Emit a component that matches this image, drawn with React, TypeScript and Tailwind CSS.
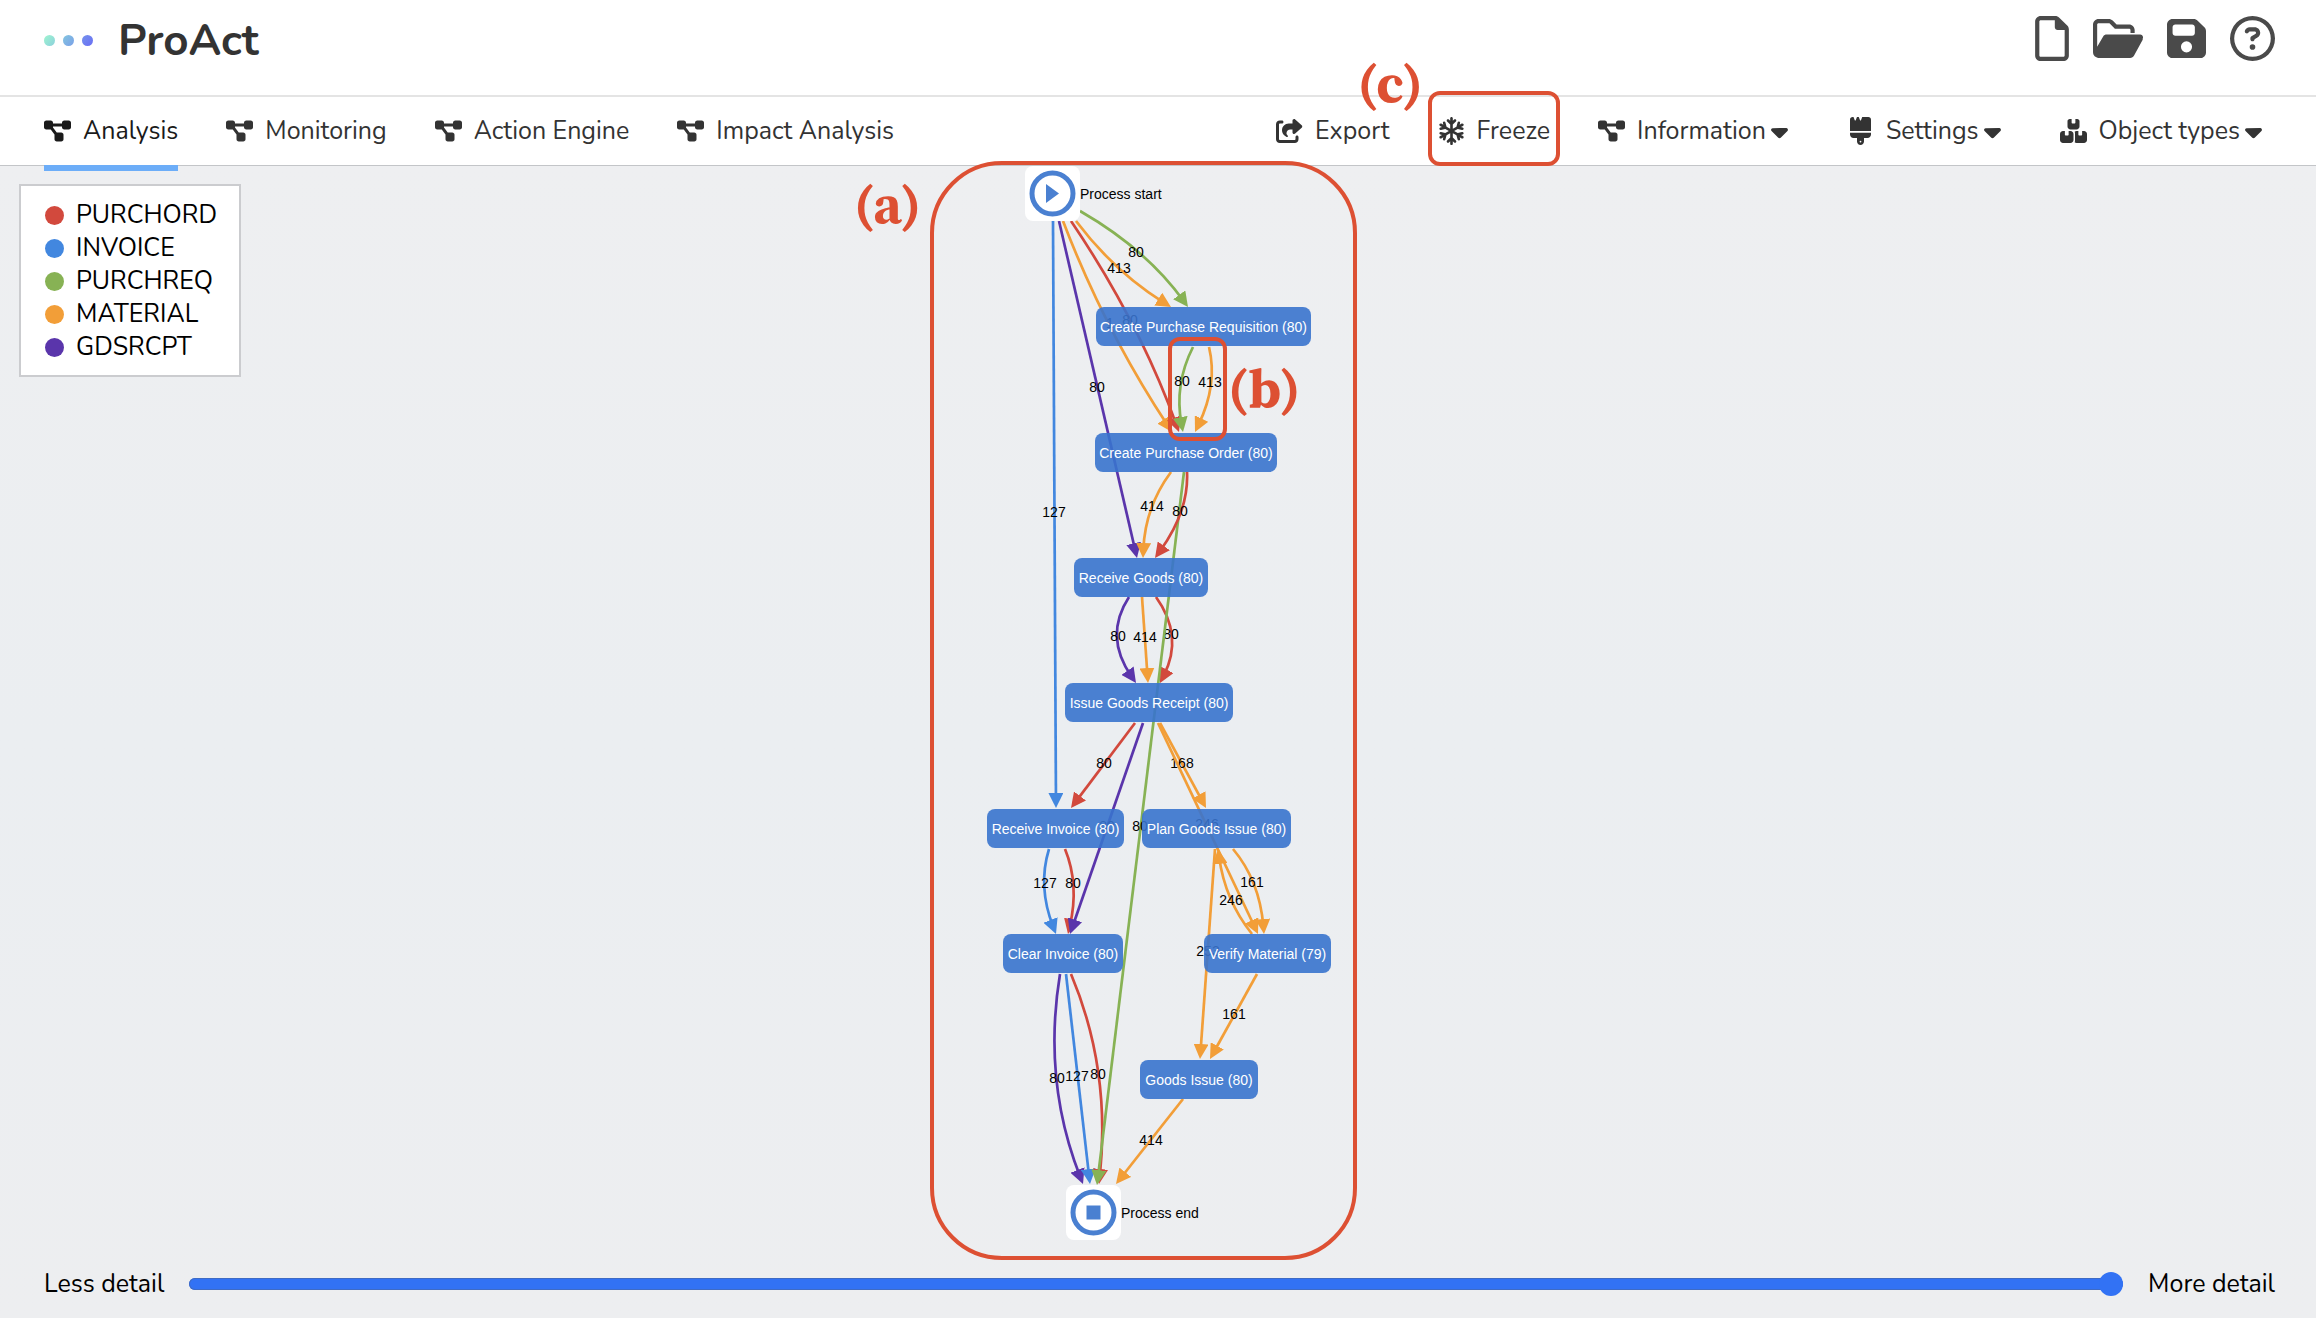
import { useState } from "react";
import type { ReactNode } from "react";
import {
  FaBoxesStacked,
  FaBrush,
  FaCaretDown,
  FaDiagramProject,
  FaFloppyDisk,
  FaRegCircleQuestion,
  FaRegFile,
  FaRegSnowflake,
  FaShareFromSquare,
} from "react-icons/fa6";

type Point = [number, number];

const COLORS = {
  red: "#d2493d",
  blue: "#4287df",
  green: "#87b254",
  orange: "#f29e38",
  purple: "#5a35ab",
};

type Color = keyof typeof COLORS;

type Edge = {
  color: Color;
  from: Point;
  to: Point;
  label: string;
  at: Point;
  via?: Point;
};

const LEGEND: { name: string; dot: string }[] = [
  { name: "PURCHORD", dot: "bg-[#d2493d]" },
  { name: "INVOICE", dot: "bg-[#4287df]" },
  { name: "PURCHREQ", dot: "bg-[#87b254]" },
  { name: "MATERIAL", dot: "bg-[#f29e38]" },
  { name: "GDSRCPT", dot: "bg-[#5a35ab]" },
];

const EDGES: Edge[] = [
  { color: "blue", from: [1053, 221], to: [1056, 808], label: "127", at: [1054, 512] },
  { color: "purple", from: [1059, 221], to: [1137, 558], label: "80", at: [1097, 387] },
  { color: "orange", from: [1063, 221], to: [1172, 432], via: [1111, 328], label: "1", at: [1110, 323] },
  { color: "red", from: [1071, 221], to: [1179, 432], via: [1132, 324], label: "80", at: [1130, 320] },
  { color: "orange", from: [1076, 221], to: [1171, 307], via: [1119, 268], label: "413", at: [1119, 268] },
  { color: "green", from: [1080, 211], to: [1188, 307], via: [1140, 254], label: "80", at: [1136, 252] },
  { color: "green", from: [1193, 347], to: [1183, 432], via: [1181, 387], label: "80", at: [1182, 381] },
  { color: "orange", from: [1209, 347], to: [1195, 432], via: [1210, 387], label: "413", at: [1210, 382] },
  { color: "orange", from: [1171, 472], to: [1143, 558], via: [1151, 511], label: "414", at: [1152, 506] },
  { color: "purple", from: [1129, 597], to: [1136, 683], via: [1118, 638], label: "80", at: [1118, 636] },
  { color: "orange", from: [1142, 597], to: [1148, 683], label: "414", at: [1145, 637] },
  { color: "red", from: [1156, 597], to: [1160, 683], via: [1171, 638], label: "80", at: [1171, 634] },
  { color: "red", from: [1135, 723], to: [1071, 808], label: "80", at: [1104, 763] },
  { color: "orange", from: [1160, 723], to: [1206, 808], label: "168", at: [1182, 763] },
  { color: "orange", from: [1158, 723], to: [1258, 934], label: "246", at: [1207, 824] },
  { color: "orange", from: [1252, 934], to: [1218, 849], via: [1230, 896], label: "246", at: [1231, 900] },
  { color: "orange", from: [1233, 849], to: [1264, 934], via: [1254, 886], label: "161", at: [1252, 882] },
  { color: "orange", from: [1215, 849], to: [1200, 1059], label: "253", at: [1208, 951] },
  { color: "blue", from: [1049, 849], to: [1056, 934], via: [1045, 889], label: "127", at: [1045, 883] },
  { color: "red", from: [1065, 849], to: [1068, 934], via: [1073, 888], label: "80", at: [1073, 883] },
  { color: "purple", from: [1143, 723], to: [1070, 934], label: "80", at: [1107, 826] },
  { color: "purple", from: [1060, 974], to: [1083, 1184], via: [1057, 1080], label: "80", at: [1057, 1078] },
  { color: "blue", from: [1066, 974], to: [1090, 1184], label: "127", at: [1077, 1076] },
  { color: "red", from: [1071, 974], to: [1099, 1184], via: [1098, 1074], label: "80", at: [1098, 1074] },
  { color: "green", from: [1184, 472], to: [1097, 1185], label: "80", at: [1140, 826] },
  { color: "red", from: [1187, 472], to: [1155, 558], via: [1180, 513], label: "80", at: [1180, 511] },
  { color: "orange", from: [1257, 974], to: [1210, 1059], label: "161", at: [1234, 1014] },
  { color: "orange", from: [1183, 1099], to: [1116, 1184], label: "414", at: [1151, 1140] },
];

const NODES: { name: string; place: string }[] = [
  { name: "Create Purchase Requisition (80)", place: "left-[258px] top-[141px] w-[215px]" },
  { name: "Create Purchase Order (80)", place: "left-[257px] top-[267px] w-[182px]" },
  { name: "Receive Goods (80)", place: "left-[236px] top-[392px] w-[134px]" },
  { name: "Issue Goods Receipt (80)", place: "left-[227px] top-[517px] w-[168px]" },
  { name: "Receive Invoice (80)", place: "left-[149px] top-[643px] w-[137px]" },
  { name: "Plan Goods Issue (80)", place: "left-[304px] top-[643px] w-[149px]" },
  { name: "Clear Invoice (80)", place: "left-[165px] top-[768px] w-[120px]" },
  { name: "Verify Material (79)", place: "left-[366px] top-[768px] w-[127px]" },
  { name: "Goods Issue (80)", place: "left-[302px] top-[894px] w-[118px]" },
];

const ARROW_LENGTH = 15;
const OVERLAP = 8;

/** Quadratic curve through `via`, stopped inside its arrow head. */
function edgePath({ from, to, via }: Edge): string {
  const mid = via ?? [(from[0] + to[0]) / 2, (from[1] + to[1]) / 2];
  const cx = 2 * mid[0] - (from[0] + to[0]) / 2;
  const cy = 2 * mid[1] - (from[1] + to[1]) / 2;
  const dx = to[0] - cx;
  const dy = to[1] - cy;
  const len = Math.hypot(dx, dy);
  const ex = to[0] - (dx / len) * OVERLAP;
  const ey = to[1] - (dy / len) * OVERLAP;
  return `M${from[0]} ${from[1]} Q${cx} ${cy} ${ex} ${ey}`;
}

function Edges() {
  return (
    <svg viewBox="838 166 640 1094" className="absolute inset-0 h-full w-full" aria-label="Process flow">
      <defs>
        {(Object.keys(COLORS) as Color[]).map((c) => (
          <marker
            key={c}
            id={`arrow-${c}`}
            markerUnits="userSpaceOnUse"
            markerWidth={ARROW_LENGTH}
            markerHeight="15"
            refX={ARROW_LENGTH - OVERLAP}
            refY="7.5"
            orient="auto"
          >
            <path d="M0 0L15 7.5L0 15Z" fill={COLORS[c]} />
          </marker>
        ))}
      </defs>
      {EDGES.map((e, i) => (
        <g key={i}>
          <path
            d={edgePath(e)}
            fill="none"
            stroke={COLORS[e.color]}
            strokeWidth="2.7"
            markerEnd={`url(#arrow-${e.color})`}
          />
          <text x={e.at[0]} y={e.at[1] + 5} textAnchor="middle" className="fill-black text-[14px]">
            {e.label}
          </text>
        </g>
      ))}
    </svg>
  );
}

function Terminal({ label, place, children }: { label: string; place: string; children: ReactNode }) {
  return (
    <div className={`absolute flex items-center ${place}`}>
      <svg viewBox="0 0 55 55" className="size-[55px] rounded-lg bg-white" aria-hidden="true">
        <circle cx="27.5" cy="27.5" r="20.5" fill="none" stroke="#4a80d1" strokeWidth="5" />
        {children}
      </svg>
      <span className="whitespace-nowrap text-[14px] leading-5 text-black">{label}</span>
    </div>
  );
}

function FolderOpenIcon() {
  return (
    <svg viewBox="0 0 576 448" className="w-[50px]" fill="currentColor" aria-hidden="true">
      <path d="M572.6 238.1l-99.2 182C464.6 437 447 448 427.8 448H64C28.7 448 0 419.3 0 384V64C0 28.7 28.7 0 64 0h117.500c17 0 33.300 6.700 45.300 18.700L272 64h144c35.300 0 64 28.700 64 64v32h-48v-32c0-8.800-7.200-16-16-16H252.100l-59.300-59.300c-3-3-7.100-4.700-11.300-4.700H64c-8.800 0-16 7.200-16 16v256l69.100-118.500c8.600-14.700 24.300-21.500 41.300-21.500H544c24.600 0 40.100 24.600 28.600 46.100z" />
    </svg>
  );
}

function Callout({ text, place }: { text: string; place: string }) {
  return (
    <span
      className={`absolute font-['Source_Serif_4','Source_Serif_Pro','Noto_Serif_CJK_SC','Noto_Serif','PT_Serif','Liberation_Serif',serif] text-[54px] font-bold leading-[48px] text-[#dd5033] ${place}`}
    >
      {text}
    </span>
  );
}

function NavButton({
  icon,
  label,
  active = false,
  menu = false,
  children,
}: {
  icon: ReactNode;
  label: string;
  active?: boolean;
  menu?: boolean;
  children?: ReactNode;
}) {
  return (
    <button
      type="button"
      aria-haspopup={menu ? "menu" : undefined}
      className={`relative flex h-full items-center whitespace-nowrap ${menu ? "pr-[11px]" : ""} ${
        active ? "text-[#1a1a1a]" : "text-[#333333]"
      }`}
    >
      <span className="mr-3 flex w-[27px] justify-center">{icon}</span>
      {label}
      {menu && <FaCaretDown className="ml-[5px] h-[27px] w-[17px]" />}
      {active && <span className="absolute -bottom-[6px] left-0 z-10 h-[6px] w-full bg-[#6cadf8]" />}
      {children}
    </button>
  );
}

const diagram = <FaDiagramProject className="h-6 w-[27px]" />;

export default function App() {
  const [detail, setDetail] = useState(100);

  return (
    <div className="flex min-h-screen flex-col bg-white font-['Nunito','Lato',sans-serif] text-[25px] leading-8 text-black">
      <header className="flex h-[97px] items-center justify-between border-b-2 border-[#e4e4e4] pb-[18px] pl-11 pr-[41px]">
        <div className="flex items-center gap-[25px] pt-1">
          <div className="flex gap-2">
            <span className="size-[11px] rounded-full bg-linear-to-br from-[#9ff5cf] to-[#8cd0dc]" />
            <span className="size-[11px] rounded-full bg-linear-to-br from-[#84c6df] to-[#7a9fe8]" />
            <span className="size-[11px] rounded-full bg-linear-to-br from-[#7592ec] to-[#6a6df4]" />
          </div>
          <h1 className="text-[44px] font-bold leading-[52px] text-[#333333]">ProAct</h1>
        </div>
        <div className="flex items-center gap-6 text-[#4a4a4a]">
          <button type="button" aria-label="New file">
            <FaRegFile className="h-[45px] w-[34px]" />
          </button>
          <button type="button" aria-label="Open file">
            <FolderOpenIcon />
          </button>
          <button type="button" aria-label="Save file">
            <FaFloppyDisk className="h-[45px] w-[39px]" />
          </button>
          <button type="button" aria-label="Help">
            <FaRegCircleQuestion className="size-[45px]" />
          </button>
        </div>
      </header>

      <nav className="flex h-[69px] items-center justify-between border-b border-[#c3c5c8] pl-11 pr-[43px]">
        <div className="flex h-full gap-12">
          <NavButton icon={diagram} label="Analysis" active />
          <NavButton icon={diagram} label="Monitoring" />
          <NavButton icon={diagram} label="Action Engine" />
          <NavButton icon={diagram} label="Impact Analysis" />
        </div>
        <div className="flex h-full gap-12">
          <NavButton icon={<FaShareFromSquare className="h-6 w-[27px]" />} label="Export" />
          <NavButton icon={<FaRegSnowflake className="h-7 w-[25px]" />} label="Freeze">
            <span className="absolute -inset-x-[10px] -bottom-px -top-[6px] z-20 rounded-xl border-4 border-[#dd5033]" />
            <Callout text="(c)" place="-left-[80px] -top-[38px]" />
          </NavButton>
          <NavButton icon={diagram} label="Information" menu />
          <NavButton icon={<FaBrush className="h-7 w-[21px]" />} label="Settings" menu />
          <NavButton icon={<FaBoxesStacked className="h-6 w-[27px]" />} label="Object types" menu />
        </div>
      </nav>

      <main className="relative flex flex-1 flex-col bg-linear-to-b from-[#eeeff1] via-[#ebeef1] to-[#edeef0]">
        <ul className="absolute left-[19px] top-[18px] z-10 border-2 border-[#cbcccf] bg-white pb-[11px] pl-6 pr-[22px] pt-[13px] leading-[33px]">
          {LEGEND.map((item) => (
            <li key={item.name} className="flex items-center gap-3">
              <span className={`size-[19px] rounded-full ${item.dot}`} />
              {item.name}
            </li>
          ))}
        </ul>

        <section
          aria-label="Process model"
          className="relative mx-auto h-[1094px] w-[640px] font-['Liberation_Sans',Arial,sans-serif]"
        >
          <Edges />
          {NODES.map((n) => (
            <div
              key={n.name}
              className={`absolute flex h-[39px] items-center justify-center whitespace-nowrap rounded-lg bg-[#3973cd]/90 text-[14px] leading-5 text-white ${n.place}`}
            >
              {n.name}
            </div>
          ))}
          <Terminal label="Process start" place="left-[187px] top-0">
            <path d="M21 18L34 27.500L21 37Z" fill="#4a80d1" />
          </Terminal>
          <Terminal label="Process end" place="left-[228px] top-[1019px]">
            <rect x="20.500" y="20.500" width="14" height="14" fill="#4a80d1" />
          </Terminal>

          <div className="absolute -top-[5px] bottom-0 left-[92px] w-[427px] rounded-[72px] border-4 border-[#dd5033]" />
          <div className="absolute left-[330px] top-[171px] h-[104px] w-[59px] rounded-xl border-4 border-[#dd5033]" />
          <Callout text="(a)" place="left-[16px] top-[14px]" />
          <Callout text="(b)" place="left-[390px] top-[198px]" />
        </section>

        <div className="mb-[10px] flex h-12 items-center gap-[25px] pl-11 pr-[41px]">
          <label htmlFor="detail" className="whitespace-nowrap">
            Less detail
          </label>
          <input
            id="detail"
            type="range"
            min={0}
            max={100}
            value={detail}
            onChange={(e) => setDetail(Number(e.target.value))}
            className="h-3 min-w-0 flex-1 appearance-none rounded-full bg-[#3272f4] shadow-[inset_0_0_0_1px_#3f6bc4] [&::-webkit-slider-thumb]:size-6 [&::-webkit-slider-thumb]:appearance-none [&::-webkit-slider-thumb]:rounded-full [&::-webkit-slider-thumb]:bg-[#3272f4]"
          />
          <span className="whitespace-nowrap">More detail</span>
        </div>
      </main>
    </div>
  );
}
